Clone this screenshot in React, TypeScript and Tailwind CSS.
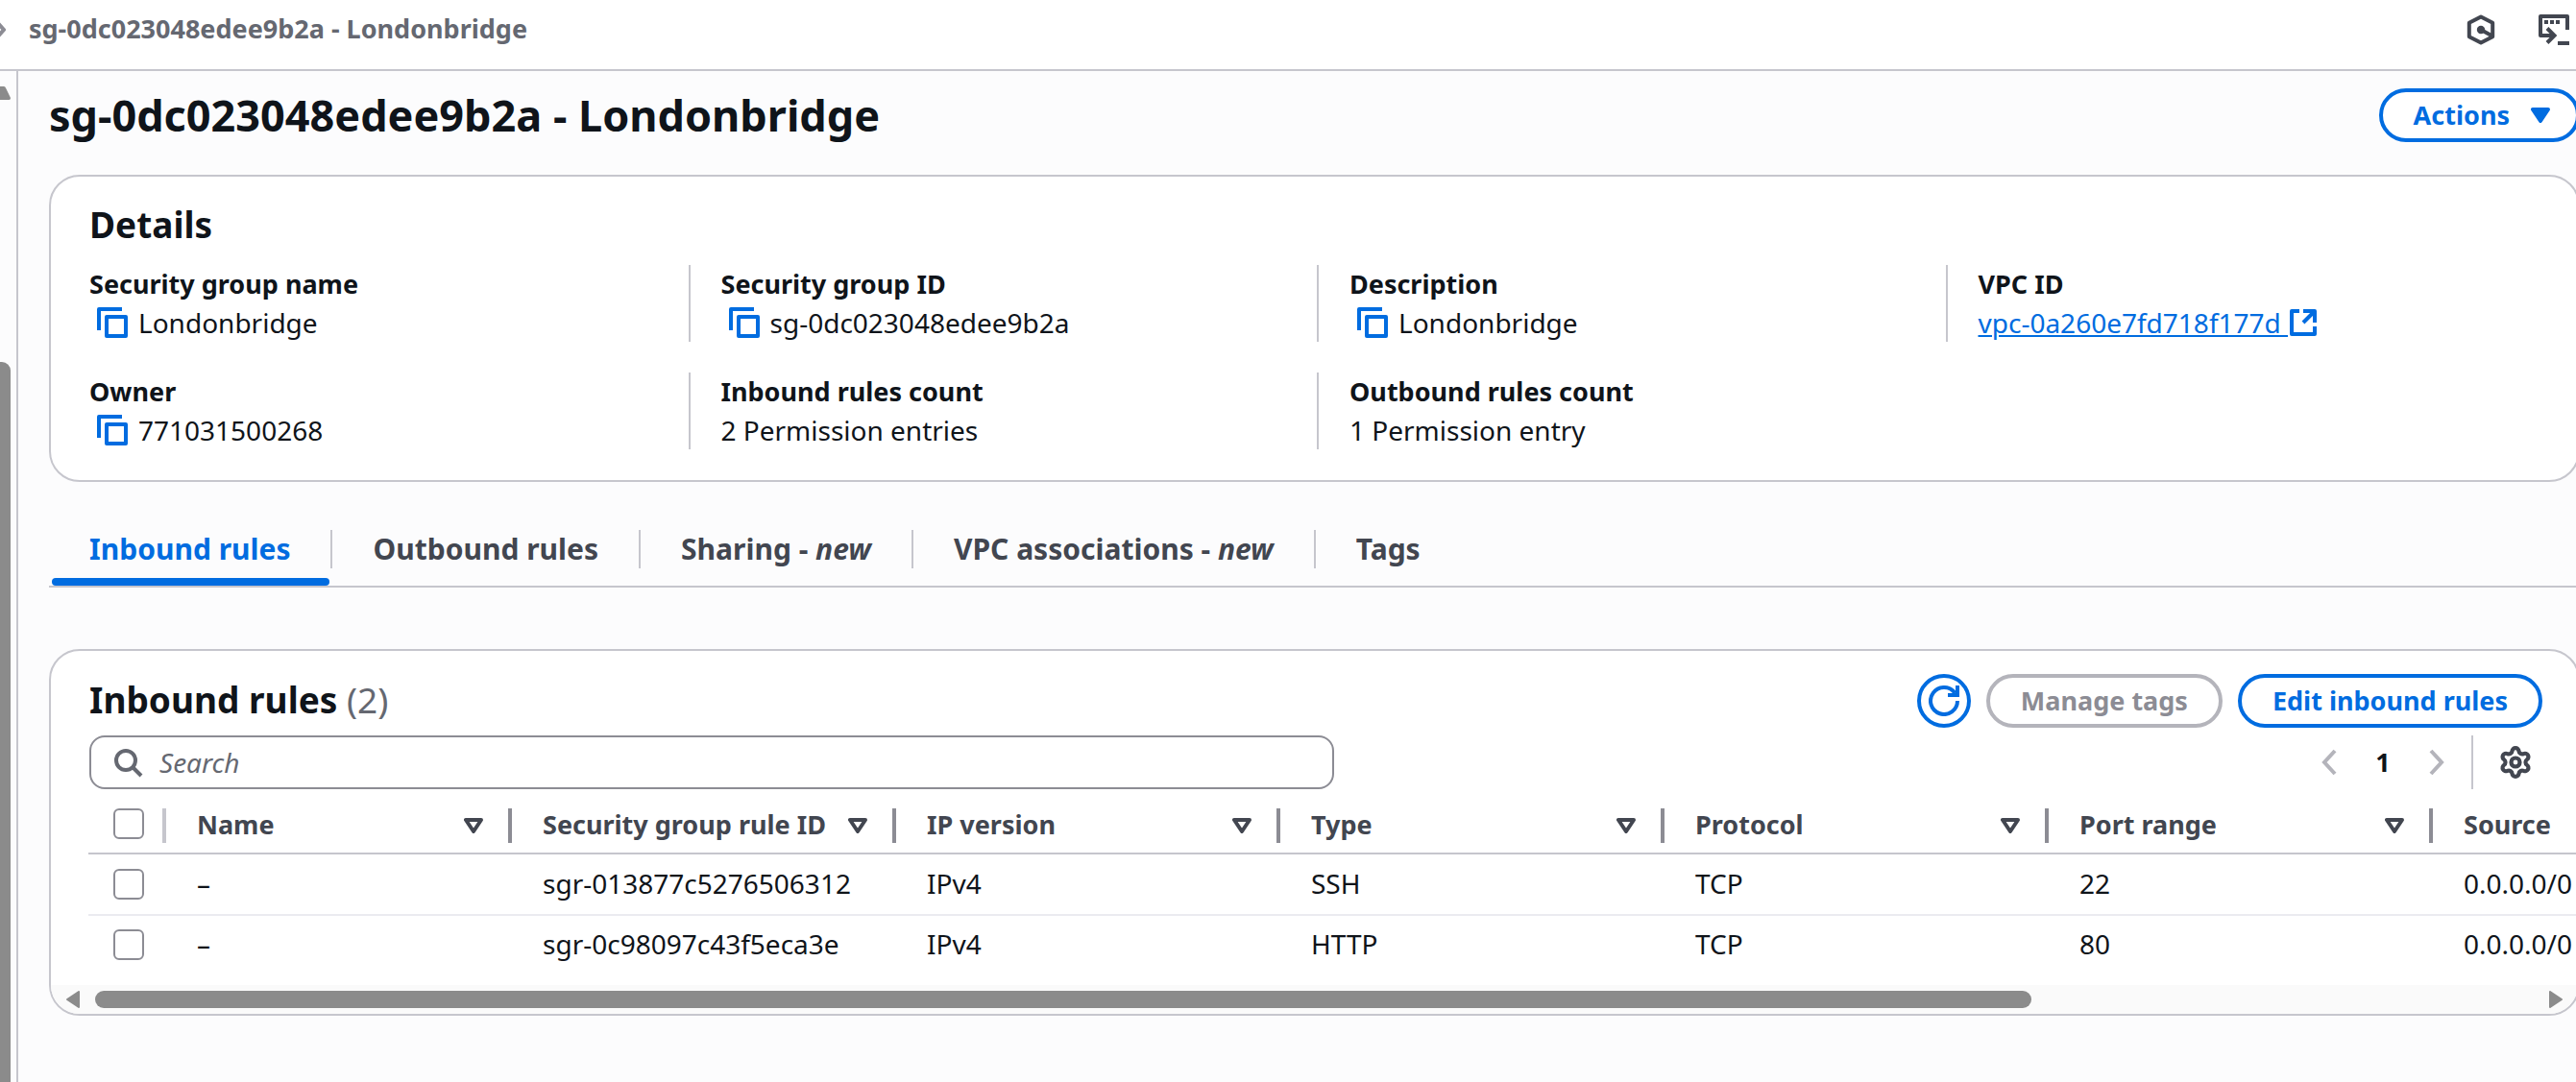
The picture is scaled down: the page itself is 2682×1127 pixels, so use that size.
import type { ReactNode } from "react";
import { Settings } from "lucide-react";

function CopyIcon() {
  return (
    <svg viewBox="0 0 32 32" className="size-8" fill="none" stroke="currentColor" strokeWidth="4" strokeLinejoin="round">
      <path d="M2 24V2H26" />
      <rect x="10" y="10" width="20" height="20" />
    </svg>
  );
}

function ExternalIcon() {
  return (
    <svg viewBox="0 0 28 28" className="size-7" fill="none" stroke="currentColor" strokeWidth="4" strokeLinejoin="round">
      <path d="M10 2H2V26H26V18" />
      <path d="M14 2H26V14M26 2L14 14" />
    </svg>
  );
}

function RefreshIcon() {
  return (
    <svg viewBox="0 0 32 32" className="size-8" fill="none" stroke="currentColor" strokeWidth="4">
      <path d="M30 16A14 14 0 1 1 27.5 8" />
      <path d="M30 0V10H20" />
    </svg>
  );
}

function SearchIcon() {
  return (
    <svg viewBox="0 0 32 32" className="size-8 shrink-0" fill="none" stroke="currentColor" strokeWidth="4">
      <circle cx="13" cy="14" r="10" />
      <path d="M20 21L29 30" />
    </svg>
  );
}

function HexagonIcon() {
  return (
    <svg viewBox="0 0 32 32" className="size-8" fill="none" stroke="currentColor" strokeWidth="4" strokeLinejoin="round">
      <path d="M16 2.4L28.2 8.8V23.2L16 29.6L3.8 23.2V8.8Z" />
      <path d="M16 16L27 22" />
      <circle cx="16" cy="16" r="4.2" fill="currentColor" stroke="none" />
    </svg>
  );
}

function TerminalIcon() {
  return (
    <svg viewBox="0 0 32 32" className="size-8" fill="none" stroke="currentColor" strokeWidth="4">
      <path d="M30 16V2H2V22H17" strokeLinejoin="round" />
      <path d="M9 14.5L16.5 22L9 29.5" />
      <path d="M20 30H32" />
      <path d="M6 8H10M12 8H16M18 8H22" />
    </svg>
  );
}

function Chevron({ left }: { left?: boolean }) {
  return (
    <svg viewBox="0 0 16 28" className="h-7 w-4" fill="none" stroke="currentColor" strokeWidth="4">
      <path d={left ? "M14 2L3 14L14 26" : "M2 2L13 14L2 26"} />
    </svg>
  );
}

function Triangle({ filled }: { filled?: boolean }) {
  return (
    <svg viewBox="0 0 20 16" className="h-4 w-5 shrink-0" fill={filled ? "currentColor" : "none"} stroke="currentColor" strokeWidth="4" strokeLinejoin="round">
      <path d="M2 2H18L10 14Z" />
    </svg>
  );
}

function Detail({ label, copy, first, children }: { label: string; copy?: boolean; first?: boolean; children: ReactNode }) {
  return (
    <div className={first ? "border-l-2 border-transparent pl-[29px]" : "border-l-2 border-[#c6c6cd] pl-8"}>
      <dt className="text-[27px] font-bold">{label}</dt>
      <dd className="flex items-center">
        {copy && (
          <button aria-label={"Copy " + label} className="mr-[11px] ml-2 text-[#006ce0]">
            <CopyIcon />
          </button>
        )}
        {children}
      </dd>
    </div>
  );
}

const tabs: { label: string; isNew?: boolean }[] = [
  { label: "Inbound rules" },
  { label: "Outbound rules" },
  { label: "Sharing", isNew: true },
  { label: "VPC associations", isNew: true },
  { label: "Tags" },
];

const columns = ["Name", "Security group rule ID", "IP version", "Type", "Protocol", "Port range", "Source"];

const rules = [
  ["–", "sgr-013877c5276506312", "IPv4", "SSH", "TCP", "22", "0.0.0.0/0"],
  ["–", "sgr-0c98097c43f5eca3e", "IPv4", "HTTP", "TCP", "80", "0.0.0.0/0"],
];

function Check({ label }: { label: string }) {
  return (
    <input
      type="checkbox"
      aria-label={label}
      className="ml-[26px] block size-8 appearance-none rounded-md border-2 border-[#8c8c94] bg-white"
    />
  );
}

function RulesTable() {
  return (
    <div className="mt-[10px] overflow-hidden pb-3 pl-[39px]">
      <table className="w-[2841px] table-fixed border-separate border-spacing-0 text-left">
        <colgroup>
          <col className="w-[81px]" />
          <col className="w-[360px]" />
          {columns.slice(1).map((c) => (
            <col key={c} className="w-[400px]" />
          ))}
        </colgroup>
        <thead>
          <tr className="text-[27px] text-[#424650]">
            <th className="h-[58px] border-b-2 border-[#c6c6cd] p-0">
              <div className="flex items-start justify-between">
                <Check label="Select all rules" />
                <span className="h-9 w-1 bg-[#c6c6cd]" />
              </div>
            </th>
            {columns.map((c) => (
              <th key={c} scope="col" className="h-[58px] border-b-2 border-[#c6c6cd] p-0 font-bold">
                <div className="flex items-center">
                  <span className="grow pb-0.5 pl-8 leading-9">{c}</span>
                  <button aria-label={"Sort by " + c} className="mr-[26px]">
                    <Triangle />
                  </button>
                  <span className="h-9 w-1 bg-[#8c8c94]" />
                </div>
              </th>
            ))}
          </tr>
        </thead>
        <tbody>
          {rules.map((row, i) => {
            const cell = i === rules.length - 1 ? "h-[60px] p-0" : "h-16 border-b-2 border-[#ebebf0] p-0";
            return (
              <tr key={row[1]}>
                <td className={cell}>
                  <Check label={"Select " + row[1]} />
                </td>
                {row.map((value, j) => (
                  <td key={j} className={cell}>
                    <span className="block pb-0.5 pl-8">{value}</span>
                  </td>
                ))}
              </tr>
            );
          })}
        </tbody>
      </table>
    </div>
  );
}

export default function App() {
  return (
    <div className="flex min-h-screen flex-col overflow-hidden bg-[#fcfcfd] font-['Noto_Sans',sans-serif] text-[28px] leading-10 text-[#0f141a]">
      <header className="flex h-[74px] items-center border-b-2 border-[#c6c6cd] bg-white pr-[7px] pb-[10px]">
        <svg viewBox="0 0 6 20" className="h-5 w-[6px]" fill="none" stroke="#8c8c94" strokeWidth="4">
          <path d="M-4 1L4 10L-4 19" />
        </svg>
        <nav aria-label="Breadcrumb" className="ml-6 grow pb-0.5 text-[27px] font-bold text-[#656871]">
          sg-0dc023048edee9b2a - Londonbridge
        </nav>
        <div className="flex gap-11 text-[#424650]">
          <button aria-label="Amazon Q">
            <HexagonIcon />
          </button>
          <button aria-label="CloudShell">
            <TerminalIcon />
          </button>
        </div>
      </header>

      <div className="flex grow">
        <aside className="flex w-[19px] shrink-0 flex-col border-r-2 border-[#c6c6cd]">
          <svg viewBox="0 0 11 14" className="mt-4 h-[14px] w-[11px]" fill="#8b8b8b">
            <path d="M0 0H4Q5.500 0 6.200 2L11 12Q11 14 9.500 14H0Z" />
          </svg>
          <div className="mt-[273px] w-[11px] grow rounded-tr-[9px] bg-[#8b8b8b]" />
        </aside>

        <main className="-mr-1 min-w-0 grow pt-[18px] pl-8">
          <div className="flex items-center justify-between">
            <h1 className="text-[45px] leading-14 font-bold">sg-0dc023048edee9b2a - Londonbridge</h1>
            <button className="flex h-14 items-center gap-[22px] rounded-full border-4 border-[#006ce0] bg-white pr-[27px] pl-8 text-[27px] font-bold text-[#006ce0]">
              Actions
              <Triangle filled />
            </button>
          </div>

          <section className="mt-[34px] rounded-[32px] border-2 border-[#c6c6cd] bg-white pt-[26px] pb-8">
            <h2 className="pl-10 text-[37px] leading-12 font-bold">Details</h2>
            <dl className="mt-[18px] grid grid-cols-4 gap-y-8 pr-1 pl-[9px]">
              <Detail label="Security group name" copy first>Londonbridge</Detail>
              <Detail label="Security group ID" copy>sg-0dc023048edee9b2a</Detail>
              <Detail label="Description" copy>Londonbridge</Detail>
              <Detail label="VPC ID">
                <a href="#vpc" className="flex items-center gap-0.5 text-[#006ce0]">
                  <span className="whitespace-pre underline decoration-2 underline-offset-2">vpc-0a260e7fd718f177d </span>
                  <ExternalIcon />
                </a>
              </Detail>
              <Detail label="Owner" copy first>771031500268</Detail>
              <Detail label="Inbound rules count">2 Permission entries</Detail>
              <Detail label="Outbound rules count">1 Permission entry</Detail>
            </dl>
          </section>

          <div role="tablist" className="mt-[50px] flex border-b-2 border-[#c6c6cd] text-[30px] font-bold text-[#424650]">
            {tabs.map((t, i) => (
              <button key={t.label} role="tab" aria-selected={i === 0} className={i === 0 ? "text-[#006ce0]" : ""}>
                <span className={i === tabs.length - 1 ? "block px-[42px]" : "block border-r-2 border-[#c6c6cd] px-[42px]"}>
                  {t.label}
                  {t.isNew && (
                    <>
                      {" - "}
                      <i>new</i>
                    </>
                  )}
                </span>
                <span className={i === 0 ? "mx-[3px] mt-[10px] block h-2 rounded-sm bg-[#006ce0]" : "mt-[10px] block h-2"} />
              </button>
            ))}
          </div>

          <section className="mt-16 overflow-hidden rounded-[32px] border-2 border-[#c6c6cd] bg-white pt-6">
            <div className="flex items-center gap-4 pr-[37px] pl-10 text-[27px] font-bold">
              <h2 className="grow pb-0.5 text-[37px] leading-[54px]">
                Inbound rules <span className="font-normal text-[#656871]">(2)</span>
              </h2>
              <button aria-label="Refresh" className="flex size-14 items-center justify-center rounded-full border-4 border-[#006ce0] text-[#006ce0]">
                <RefreshIcon />
              </button>
              <button disabled className="h-14 rounded-full border-4 border-[#b4b4bb] px-8 text-[#8c8c94]">
                Manage tags
              </button>
              <button className="h-14 rounded-full border-4 border-[#006ce0] px-8 text-[#006ce0]">Edit inbound rules</button>
            </div>

            <div className="mt-2 flex h-14 items-center justify-between pr-[37px] pl-10">
              <label className="flex h-14 w-[1296px] max-w-full items-center gap-4 rounded-2xl border-2 border-[#8c8c94] pl-[23px] text-[#656871]">
                <SearchIcon />
                <input
                  type="search"
                  aria-label="Search rules"
                  placeholder="Search"
                  className="min-w-0 grow outline-none placeholder:text-[#656871] placeholder:italic"
                />
              </label>
              <div className="flex items-center">
                <button aria-label="Previous page" disabled className="text-[#b4b4bb]">
                  <Chevron left />
                </button>
                <button aria-current="page" className="w-24 text-[27px] font-bold">1</button>
                <button aria-label="Next page" disabled className="text-[#b4b4bb]">
                  <Chevron />
                </button>
                <span className="mr-[26px] ml-7 h-14 w-0.5 bg-[#c6c6cd]" />
                <button aria-label="Preferences" className="mr-[10px] text-[#424650]">
                  <Settings size={36} strokeWidth={2.8} />
                </button>
              </div>
            </div>

            <RulesTable />

            <div className="flex h-[30px] items-center bg-[#fafafa] px-4 text-[#8b8b8b]">
              <svg viewBox="0 0 14 18" className="h-[18px] w-[14px]" fill="currentColor" stroke="currentColor" strokeWidth="2" strokeLinejoin="round">
                <path d="M13 1V17L1 9Z" />
              </svg>
              <div className="mx-4 h-[18px] grow">
                <div className="h-[18px] w-27/34 rounded-full bg-[#8b8b8b]" />
              </div>
              <svg viewBox="0 0 14 18" className="h-[18px] w-[14px]" fill="currentColor" stroke="currentColor" strokeWidth="2" strokeLinejoin="round">
                <path d="M1 1V17L13 9Z" />
              </svg>
            </div>
          </section>
        </main>
      </div>
    </div>
  );
}
